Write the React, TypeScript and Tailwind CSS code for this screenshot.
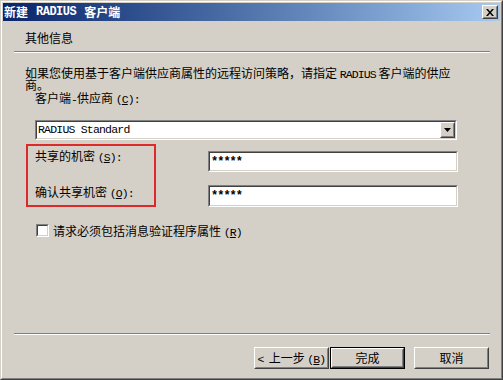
function M({ children, className = "" }: { children: React.ReactNode; className?: string }) {
  return (
    <span className={`font-['Liberation_Mono',monospace] text-[11.5px] leading-[0] tracking-[-0.9px] ${className}`}>
      {children}
    </span>
  );
}

function Key({ k }: { k: string }) {
  return (
    <M>
      (<span className="underline">{k}</span>)
    </M>
  );
}

function Sunken({ className = "", children }: { className?: string; children?: React.ReactNode }) {
  return (
    <div className={`border border-t-[#808080] border-l-[#808080] border-b-white border-r-white ${className}`}>
      <div className="flex h-full items-center border border-t-[#404040] border-l-[#404040] border-b-[#d4d0c8] border-r-[#d4d0c8] bg-white">
        {children}
      </div>
    </div>
  );
}

function Raised({ className = "", children }: { className?: string; children?: React.ReactNode }) {
  return (
    <div className={`border border-t-white border-l-white border-b-[#404040] border-r-[#404040] ${className}`}>
      <div className="flex h-full items-center justify-center border border-t-[#d4d0c8] border-l-[#d4d0c8] border-b-[#808080] border-r-[#808080] bg-[#d4d0c8]">
        {children}
      </div>
    </div>
  );
}

function Btn({ children, isDefault }: { children: React.ReactNode; isDefault?: boolean }) {
  if (isDefault) {
    return (
      <div className="h-[22px] w-[75px] border border-black">
        <Raised className="h-full">{children}</Raised>
      </div>
    );
  }
  return <Raised className="h-[22px] w-[75px]">{children}</Raised>;
}

function Stars() {
  return (
    <span className="pl-[1px] font-['Liberation_Mono',monospace] text-[12px] font-bold leading-none tracking-[-1px]">
      *****
    </span>
  );
}

export default function App() {
  return (
    <div className="relative h-[380px] w-[503px] border border-t-[#d4d0c8] border-l-[#d4d0c8] border-b-[#404040] border-r-[#404040] bg-[#d4d0c8] font-['Noto_Sans_CJK_SC',sans-serif] text-[12px] text-black">
      <div className="flex h-full flex-col border border-t-white border-l-white border-b-[#808080] border-r-[#808080] p-px">
        {/* title bar */}
        <div className="flex h-[18px] shrink-0 items-center justify-between bg-gradient-to-r from-[#0a246a] to-[#a6caf0] pl-[1px] pr-[2px]">
          <span className="flex items-center whitespace-nowrap font-bold leading-none text-white">
            新建
            <span className="mx-[8px] font-['Liberation_Mono',monospace] text-[12px] font-bold tracking-[-0.5px]">RADIUS</span>
            客户端
          </span>
          <Raised className="h-[14px] w-[16px]">
            <svg width="8" height="7" viewBox="0 0 8 7">
              <path d="M0 0h2l2 2.5 2-2.5h2L5 3.5 8 7H6L4 4.5 2 7H0l3-3.5z" fill="black" />
            </svg>
          </Raised>
        </div>

        {/* body */}
        <div className="flex flex-1 flex-col">
          <div className="h-[30px] pl-[22px] pt-[11px] leading-[12px]">其他信息</div>
          <div className="ml-[11px] h-[2px] w-[476px] border-t border-b border-t-[#808080] border-b-white" />

          <div className="ml-[22px] mt-[14px] whitespace-nowrap leading-[12px]">
            <div className="h-[12px]">
              如果您使用基于客户端供应商属性的远程访问策略，请指定 <M>RADIUS</M> 客户端的供应
            </div>
            <div className="h-[12px]">商。</div>
          </div>

          <div className="ml-[32px] mt-[1px] h-[12px] whitespace-nowrap leading-[12px]">
            客户端<M>-</M>供应商 <Key k="C" />
            <M>:</M>
          </div>

          <Sunken className="ml-[32px] mt-[16px] h-[20px] w-[422px]">
            <div className="flex h-full w-full items-center justify-between pl-[1px]">
              <span className="font-['Liberation_Mono',monospace] text-[11.5px] leading-none tracking-[-0.8px]">
                RADIUS Standard
              </span>
              <Raised className="h-full w-[15px]">
                <svg width="7" height="4" viewBox="0 0 7 4">
                  <path d="M0 0h7L3.5 4z" fill="black" />
                </svg>
              </Raised>
            </div>
          </Sunken>

          <div className="ml-[32px] mt-[11px] flex items-start">
            <div className="mt-[-1px] h-[12px] w-[173px] whitespace-nowrap leading-[12px]">
              共享的机密 <Key k="S" />
              <M>:</M>
            </div>
            <Sunken className="h-[21px] w-[250px]">
              <Stars />
            </Sunken>
          </div>

          <div className="ml-[32px] mt-[13px] flex items-start">
            <div className="mt-[1px] h-[12px] w-[173px] whitespace-nowrap leading-[12px]">
              确认共享机密 <Key k="O" />
              <M>:</M>
            </div>
            <Sunken className="h-[22px] w-[250px]">
              <Stars />
            </Sunken>
          </div>

          <div className="ml-[33px] mt-[17px] flex items-center gap-[4px]">
            <Sunken className="h-[13px] w-[13px]" />
            <span className="whitespace-nowrap leading-[13px]">
              请求必须包括消息验证程序属性 <Key k="R" />
            </span>
          </div>

          <div className="mt-auto">
            <div className="ml-[11px] h-[2px] w-[476px] border-t border-b border-t-[#808080] border-b-white" />
            <div className="mt-[12px] flex justify-end pb-[8px] pr-[11px]">
              <Btn>
                <span className="whitespace-nowrap leading-[12px]">
                  <M className="mr-[5px]">&lt;</M>上一步 <Key k="B" />
                </span>
              </Btn>
              <div className="ml-[1px]">
                <Btn isDefault>完成</Btn>
              </div>
              <div className="ml-[9px]">
                <Btn>取消</Btn>
              </div>
            </div>
          </div>
        </div>
      </div>

      {/* red annotation box */}
      <div className="absolute left-[25px] top-[143px] h-[63px] w-[130px] border-2 border-[#dc2a2a]" />
    </div>
  );
}
